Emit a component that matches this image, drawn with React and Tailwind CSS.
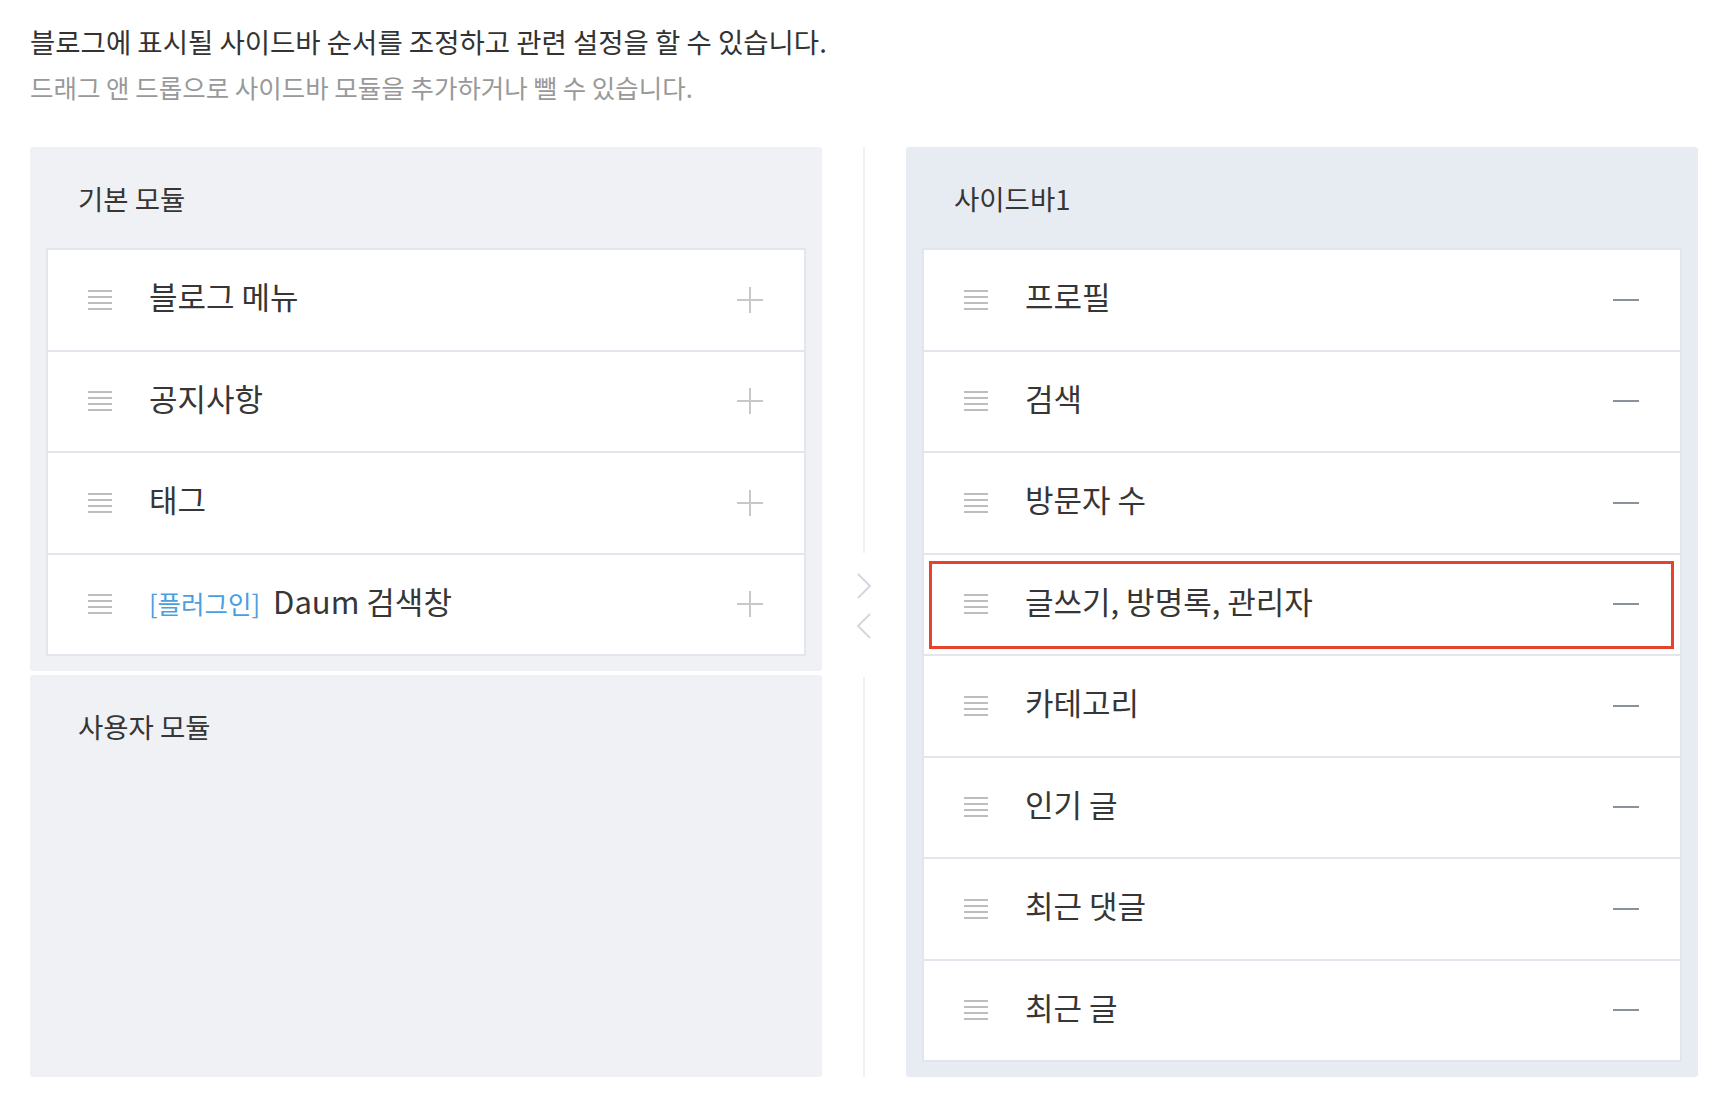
import React from 'react';

const basicModules = [
  { id: 'menu', label: '블로그 메뉴' },
  { id: 'notice', label: '공지사항' },
  { id: 'tag', label: '태그' },
  { id: 'daum', label: 'Daum 검색창', plugin: true },
];

const sidebarModules = [
  { id: 'profile', label: '프로필' },
  { id: 'search', label: '검색' },
  { id: 'visitors', label: '방문자 수' },
  { id: 'admin', label: '글쓰기, 방명록, 관리자', marked: true },
  { id: 'category', label: '카테고리' },
  { id: 'popular', label: '인기 글' },
  { id: 'comments', label: '최근 댓글' },
  { id: 'recent', label: '최근 글' },
];

const DragHandle = () => (
  <svg width="24" height="20" viewBox="0 0 24 20" className="shrink-0">
    <g fill="#bdbdbd">
      <rect x="0" y="0" width="24" height="2" />
      <rect x="0" y="6" width="24" height="2" />
      <rect x="0" y="12" width="24" height="2" />
      <rect x="0" y="18" width="24" height="2" />
    </g>
  </svg>
);

const PlusIcon = () => (
  <svg width="26" height="26" viewBox="0 0 26 26">
    <g fill="#c8c8c8">
      <rect x="0" y="12" width="26" height="2" />
      <rect x="12" y="0" width="2" height="26" />
    </g>
  </svg>
);

const MinusIcon = () => (
  <svg width="26" height="4" viewBox="0 0 26 4">
    <rect x="0" y="1" width="26" height="2" fill="#8a919c" />
  </svg>
);

const ModuleRow = ({ item, added }) => (
  <div className="relative flex items-center h-[101.5px] first:h-[99.5px] bg-white border-t-2 border-[#e1e5ec] first:border-t-0">
    <div className="pl-[40px]">
      <DragHandle />
    </div>
    <div className="flex items-baseline flex-1 pl-[37px] pb-[8px] text-[31px] leading-none text-[#363636]">
      {item.plugin && (
        <span className="text-[25.5px] text-[#4a9ee2] mr-[13px]">[플러그인]</span>
      )}
      <span>{item.label}</span>
    </div>
    <div className="pr-[41px] flex items-center">
      {added ? <MinusIcon /> : <PlusIcon />}
    </div>
    {item.marked && (
      <div className="absolute left-[5px] right-[6px] top-[6px] bottom-[5px] border-[3px] border-[#e5432b]" />
    )}
  </div>
);

const PanelTitle = ({ children }) => (
  <div className="h-[101px] flex items-center pl-[48px] pt-[2px] text-[27.5px] text-[#363636]">
    {children}
  </div>
);

const Panel = ({ title, items, added, className }) => (
  <div className={`rounded-[3px] pb-[15px] ${className}`}>
    <PanelTitle>{title}</PanelTitle>
    <div className="mx-[16px] border-2 border-[#e1e5ec] bg-white">
      {items.map((item) => (
        <ModuleRow key={item.id} item={item} added={added} />
      ))}
    </div>
  </div>
);

export default function App() {
  return (
    <div className="w-[1710px] h-[1094px] bg-white pl-[30px] pr-[12px] pt-[23px] font-['Noto_Sans_CJK_KR','Noto_Sans',sans-serif]">
      {/* Description */}
      <p className="text-[27.5px] leading-[36px] text-[#333]">
        블로그에 표시될 사이드바 순서를 조정하고 관련 설정을 할 수 있습니다.
      </p>
      <p className="mt-[10px] text-[25.5px] leading-[36px] text-[#999]">
        드래그 앤 드롭으로 사이드바 모듈을 추가하거나 뺄 수 있습니다.
      </p>

      {/* Modules */}
      <div className="flex h-[930px] mt-[42px]">
        <div className="w-[792px] flex flex-col gap-[4px]">
          <Panel title="기본 모듈" items={basicModules} className="bg-[#f0f1f5]" />
          <div className="flex-1 rounded-[3px] bg-[#f0f1f5]">
            <PanelTitle>사용자 모듈</PanelTitle>
          </div>
        </div>

        <div className="w-[84px] flex flex-col items-center">
          <div className="w-[2px] h-[406px] bg-[#eef0f4]" />
          <div className="flex flex-col items-center gap-[14px] mt-[20px]">
            <svg width="16" height="26" viewBox="0 0 16 26">
              <polyline points="2,1 14,13 2,25" fill="none" stroke="#d3d8e0" strokeWidth="2" />
            </svg>
            <svg width="16" height="26" viewBox="0 0 16 26">
              <polyline points="14,1 2,13 14,25" fill="none" stroke="#d3d8e0" strokeWidth="2" />
            </svg>
          </div>
          <div className="w-[2px] flex-1 mt-[38px] bg-[#eef0f4]" />
        </div>

        <div className="w-[792px]">
          <Panel title="사이드바1" items={sidebarModules} added className="bg-[#e7ebf2] h-full" />
        </div>
      </div>
    </div>
  );
}
